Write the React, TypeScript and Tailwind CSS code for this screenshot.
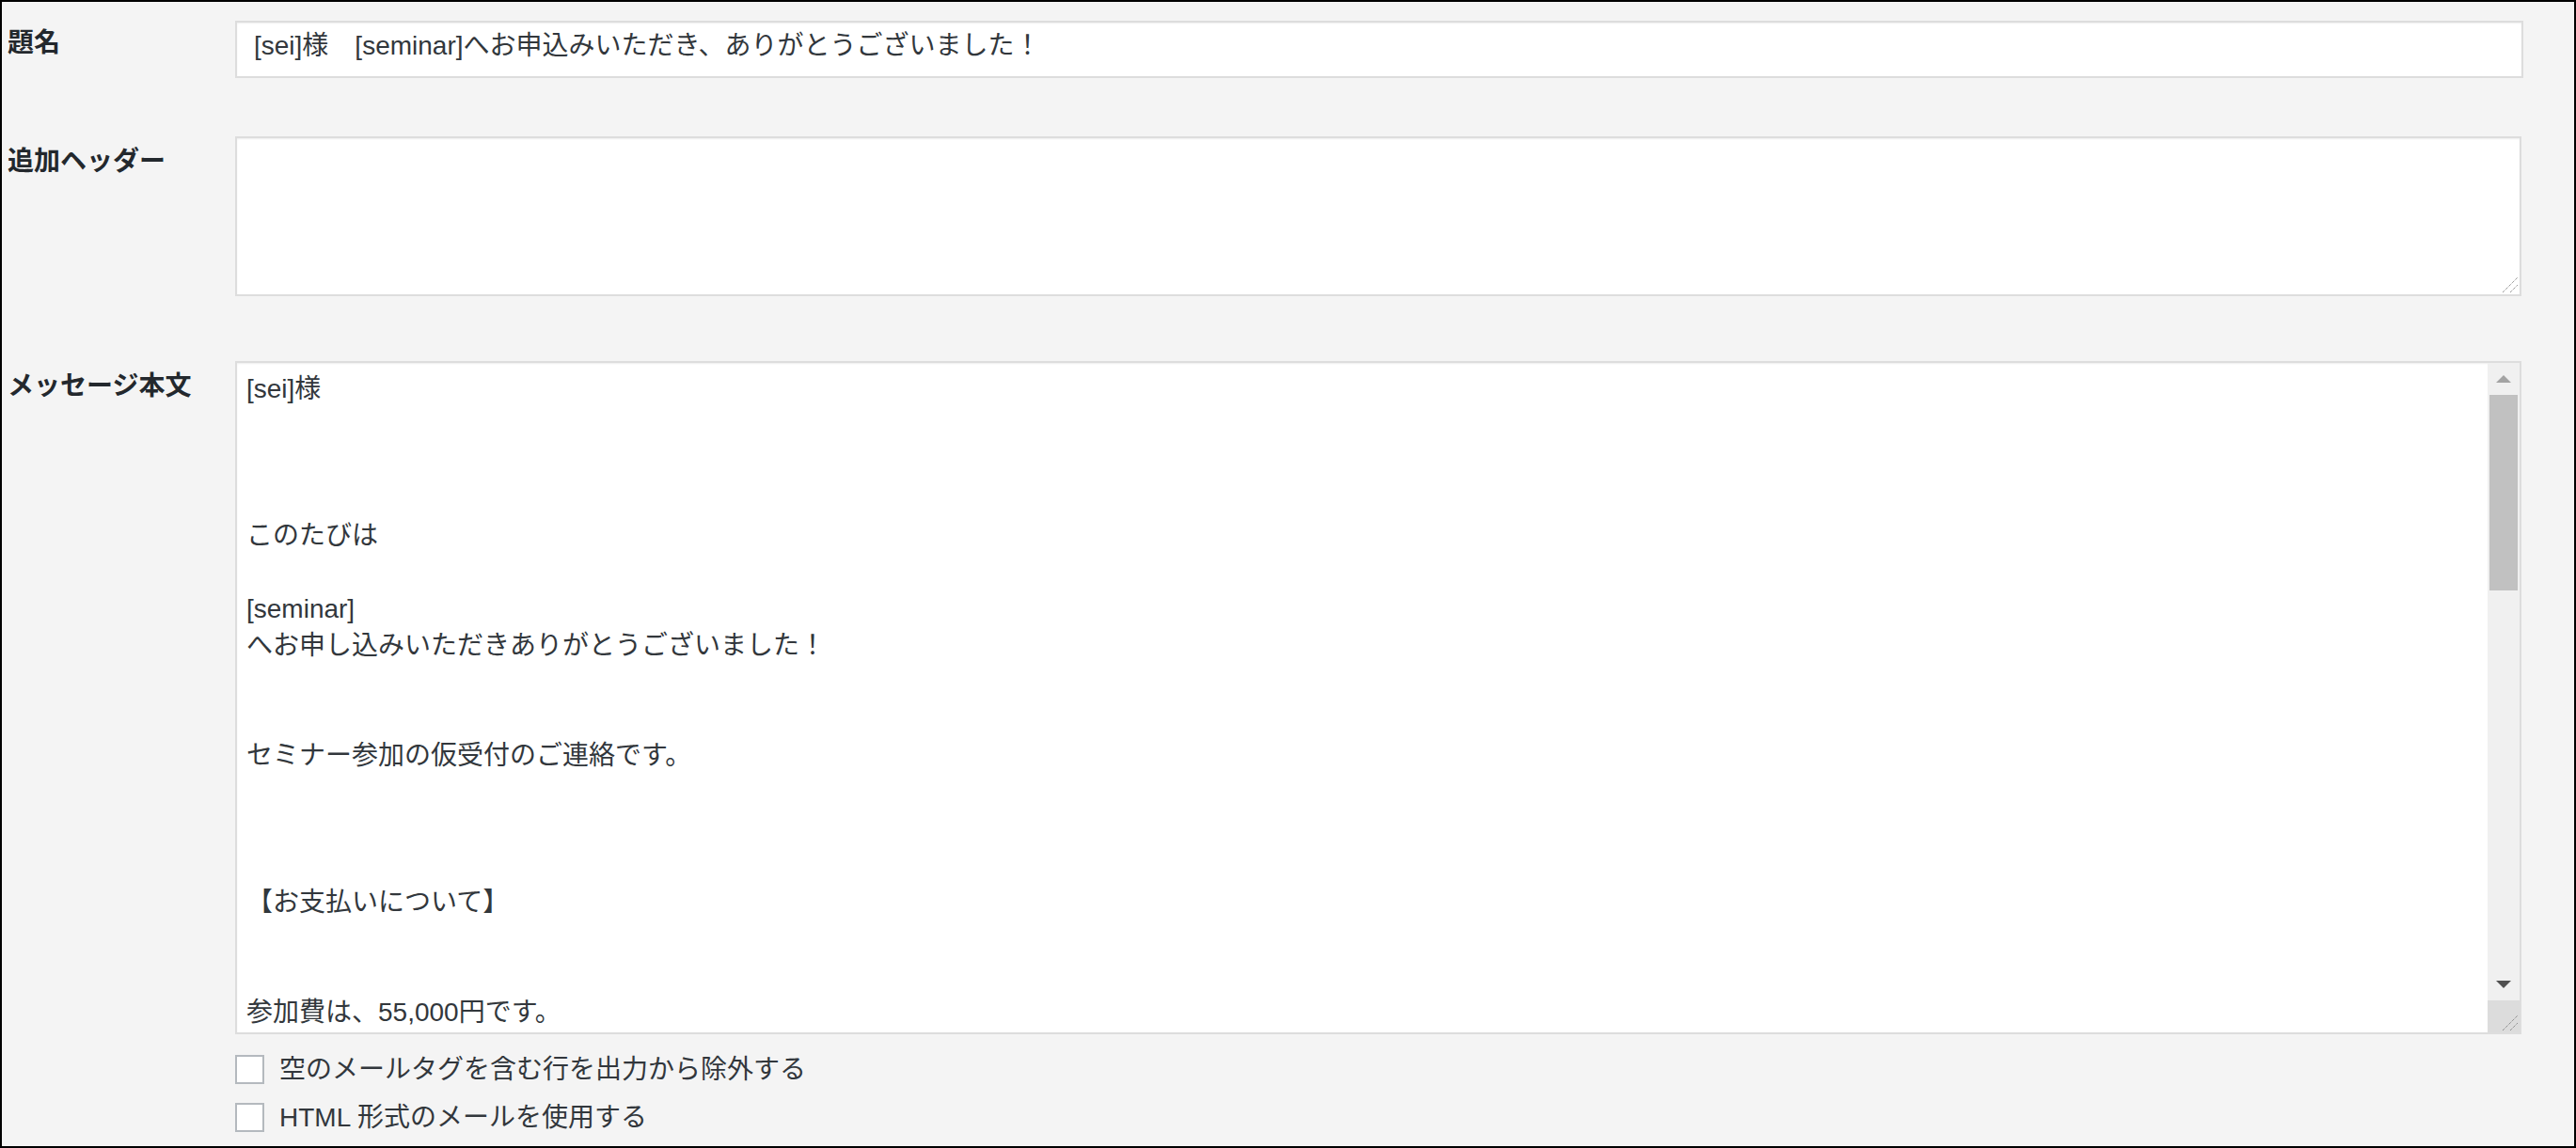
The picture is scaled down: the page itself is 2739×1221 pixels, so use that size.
import React from 'react';

function Resizer() {
  return (
    <svg width="18" height="18" viewBox="0 0 18 18" className="block">
      <line x1="1" y1="17" x2="17" y2="1" stroke="#6f6f6f" strokeWidth="1" strokeDasharray="1 1" />
      <line x1="9" y1="17" x2="17" y2="9" stroke="#6f6f6f" strokeWidth="1" strokeDasharray="1 1" />
    </svg>
  );
}

export default function App() {
  const lines = [
    '[sei]様',
    '',
    '',
    '',
    'このたびは',
    '',
    '[seminar]',
    'へお申し込みいただきありがとうございました！',
    '',
    '',
    'セミナー参加の仮受付のご連絡です。',
    '',
    '',
    '',
    '【お支払いについて】',
    '',
    '',
    '参加費は、55,000円です。',
    '',
    '',
  ];

  const options = ['空のメールタグを含む行を出力から除外する', 'HTML 形式のメールを使用する'];

  return (
    <div className="w-[2739px] h-[1221px] border-2 border-black bg-[#f4f4f4] pl-[6px] pr-[54px] pt-[20px] font-['Liberation_Sans','Noto_Sans_CJK_JP',sans-serif] text-[28px] text-[#32373c] overflow-hidden">
      {/* 題名 */}
      <div className="grid grid-cols-[242px_1fr]">
        <div className="pt-[6px] leading-[36px] font-bold text-[#23282d]">題名</div>
        <div className="h-[61px] border-2 border-[#dddddd] bg-white pl-[18px] pt-[5px] leading-[39px] whitespace-nowrap shadow-[inset_0_1px_2px_rgba(0,0,0,0.07)]">
          [sei]様　[seminar]へお申込みいただき、ありがとうございました！
        </div>
      </div>

      {/* 追加ヘッダー */}
      <div className="grid grid-cols-[242px_1fr] mt-[62px]">
        <div className="pt-[9px] leading-[36px] font-bold text-[#23282d]">追加ヘッダー</div>
        <div className="relative h-[170px] mr-[2px] border-2 border-[#dddddd] bg-white shadow-[inset_0_1px_2px_rgba(0,0,0,0.07)]">
          <div className="absolute right-[1px] bottom-[1px]">
            <Resizer />
          </div>
        </div>
      </div>

      {/* メッセージ本文 */}
      <div className="grid grid-cols-[242px_1fr] mt-[69px]">
        <div className="pt-[9px] leading-[36px] font-bold text-[#23282d]">メッセージ本文</div>
        <div>
          <div className="flex h-[716px] mr-[2px] border-2 border-[#dddddd] bg-white shadow-[inset_0_1px_2px_rgba(0,0,0,0.07)]">
            <div className="flex-1 overflow-hidden pl-[10px] pt-[8px] leading-[39px] whitespace-pre">
              {lines.map((line, i) => (
                <div key={i} className="h-[39px]">
                  {line}
                </div>
              ))}
            </div>

            {/* Scrollbar */}
            <div className="w-[34px] flex flex-col bg-[#f0f0f0]">
              <div className="h-[34px] flex items-center justify-center">
                <svg width="16" height="8" viewBox="0 0 16 8">
                  <polygon points="0,8 8,0 16,8" fill="#a3a3a3" />
                </svg>
              </div>
              <div className="h-[208px] mx-[2px] bg-[#c1c1c1]" />
              <div className="flex-1" />
              <div className="h-[34px] flex items-center justify-center">
                <svg width="16" height="8" viewBox="0 0 16 8">
                  <polygon points="0,0 16,0 8,8" fill="#505050" />
                </svg>
              </div>
              <div className="h-[34px] bg-[#dcdcdc] flex items-end justify-end pr-[1px] pb-[1px]">
                <Resizer />
              </div>
            </div>
          </div>

          {/* Options */}
          <div className="mt-[22px] flex flex-col gap-[20px]">
            {options.map((label, i) => (
              <label key={i} className="flex items-center gap-[16px] leading-[31px] whitespace-nowrap">
                <span className="w-[31px] h-[31px] border-2 border-[#b4b9be] bg-white shrink-0" />
                <span>{label}</span>
              </label>
            ))}
          </div>
        </div>
      </div>
    </div>
  );
}
